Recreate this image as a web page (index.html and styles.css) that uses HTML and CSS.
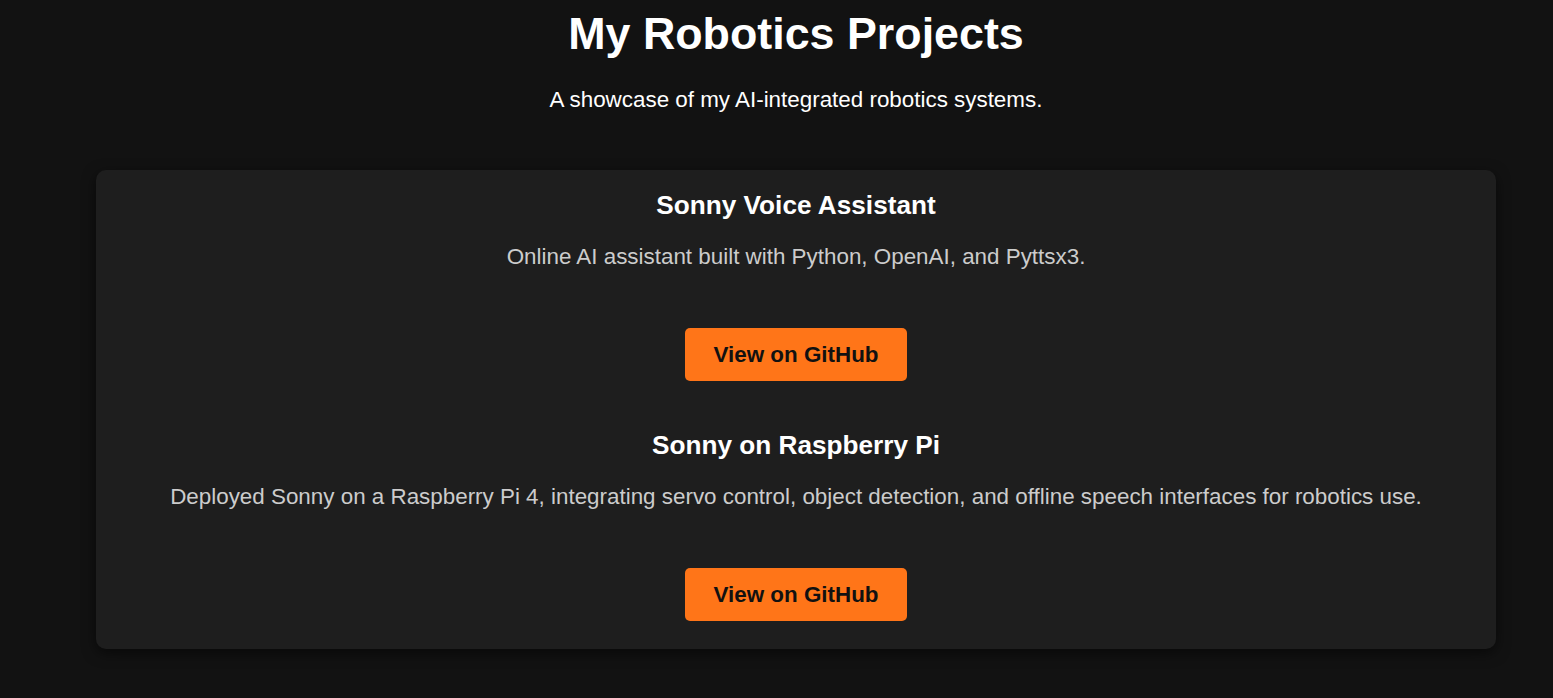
FILE: index.html
```html
<!DOCTYPE html>
<html lang="en">
<head>
<meta charset="utf-8">
<title>My Robotics Projects</title>
<link rel="stylesheet" href="styles.css">
</head>
<body>
<div class="page">
  <header class="hero">
    <h1 class="hero-title">My Robotics Projects</h1>
    <p class="hero-sub">A showcase of my AI-integrated robotics systems.</p>
  </header>
  <section class="card">
    <article class="project">
      <h3 class="project-title">Sonny Voice Assistant</h3>
      <p class="project-desc">Online AI assistant built with Python, OpenAI, and Pyttsx3.</p>
      <a class="btn" href="#">View on GitHub</a>
    </article>
    <article class="project">
      <h3 class="project-title">Sonny on Raspberry Pi</h3>
      <p class="project-desc">Deployed Sonny on a Raspberry Pi 4, integrating servo control, object detection, and offline speech interfaces for robotics use.</p>
      <a class="btn" href="#">View on GitHub</a>
    </article>
  </section>
</div>
</body>
</html>
```
FILE: styles.css
```css
* { box-sizing: border-box; }
html, body { margin: 0; padding: 0; }
body {
  background: #121212;
  color: #ffffff;
  font-family: "Liberation Sans", Arial, sans-serif;
  height: 698px;
  overflow: hidden;
}
.page {
  padding-left: 39px;
  padding-top: 7px;
}
.hero { text-align: center; }
.hero-title {
  margin: 0;
  font-size: 44.8px;
  line-height: 52px;
  font-weight: 700;
}
.hero-sub {
  margin: 27.6px 0 0;
  font-size: 22.4px;
  line-height: 26px;
}
.card {
  max-width: 1400px;
  margin: 57.4px auto 0;
  background: #1e1e1e;
  border-radius: 10px;
  box-shadow: 0 4px 14px rgba(0, 0, 0, 0.55);
  padding: 20px 20px 28px;
  display: flex;
  flex-direction: column;
  gap: 49.4px;
}
.project {
  display: flex;
  flex-direction: column;
  align-items: center;
  text-align: center;
}
.project-title {
  margin: 0;
  font-size: 26.2px;
  line-height: 30px;
  font-weight: 700;
}
.project-desc {
  margin: 24.3px 0 57.4px;
  font-size: 22.4px;
  line-height: 26px;
  color: #cccccc;
}
.btn {
  display: inline-block;
  background: #ff7518;
  color: #111111;
  text-decoration: none;
  font-weight: 700;
  font-size: 22.4px;
  line-height: 25px;
  padding: 14px 28px;
  border-radius: 5px;
}
```
